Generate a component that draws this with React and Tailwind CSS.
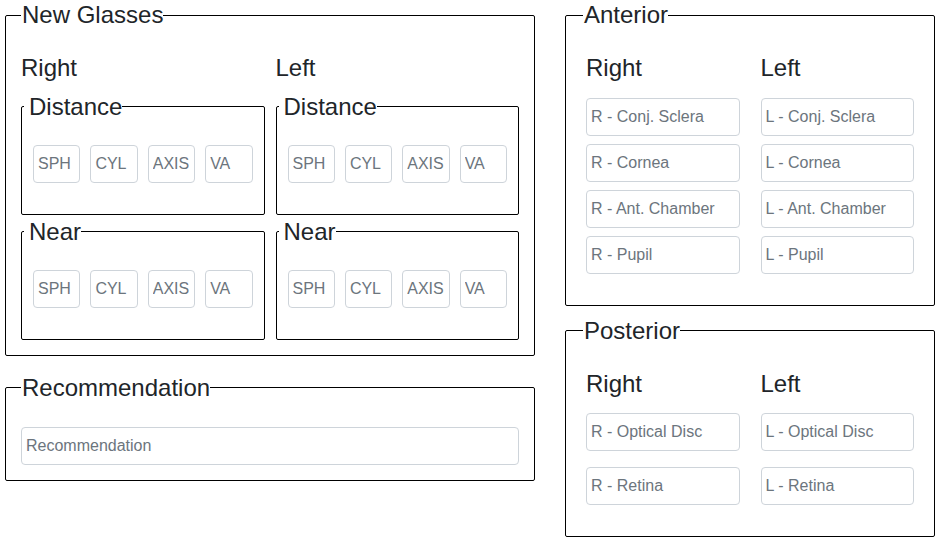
import { useState } from "react"

const font = "font-['Liberation_Sans',Arial,sans-serif]"

function Field({ placeholder }) {
  const [value, setValue] = useState("")
  return (
    <input
      type="text"
      value={value}
      onChange={(e) => setValue(e.target.value)}
      placeholder={placeholder}
      className="block h-[38px] w-full min-w-0 rounded-[4px] border border-[#ced4da] bg-white px-[4px] text-base text-[#495057] outline-none placeholder:text-[#6c757d]"
    />
  )
}

function Legend({ children, className = "" }) {
  return (
    <legend className={`text-2xl leading-[30px] text-[#212529] ${className}`}>
      {children}
    </legend>
  )
}

function Heading({ children, className = "" }) {
  return <h4 className={`text-2xl font-medium leading-[1.2] text-[#212529] ${className}`}>{children}</h4>
}

// one Distance / Near box with its four small inputs
function LensBox({ title, className = "" }) {
  return (
    <fieldset className={`rounded-[2px] border border-black px-[2px] pt-[23px] pb-[31px] ${className}`}>
      <Legend className="pl-[5px]">{title}</Legend>
      <div className="grid grid-cols-4 gap-[10px] px-[9px]">
        <Field placeholder="SPH" />
        <Field placeholder="CYL" />
        <Field placeholder="AXIS" />
        <Field placeholder="VA" />
      </div>
    </fieldset>
  )
}

function EyeColumn({ side }) {
  return (
    <div>
      <Heading className="mb-[9px]">{side}</Heading>
      <LensBox title="Distance" />
      <LensBox title="Near" className="mt-[2px]" />
    </div>
  )
}

function SideBySide({ title, rows, gapY, headingMb }) {
  return (
    <fieldset className="rounded-[2px] border border-black px-[17px] pt-[24px] pb-[31px]">
      <Legend className="pl-[1px]">{title}</Legend>
      <div className="px-[3px]">
        <div className="grid grid-cols-2 gap-x-[21px]">
          <Heading className={headingMb}>Right</Heading>
          <Heading className={headingMb}>Left</Heading>
        </div>
        <div className={`grid grid-cols-2 gap-x-[21px] ${gapY}`}>
          {rows.map((r) => [
            <Field key={"R" + r} placeholder={"R - " + r} />,
            <Field key={"L" + r} placeholder={"L - " + r} />,
          ])}
        </div>
      </div>
    </fieldset>
  )
}

export default function App() {
  return (
    <div className={`flex min-h-screen gap-[30px] bg-white px-[5px] ${font}`}>
      <div className="flex w-[530px] flex-col gap-[17px]">
        <fieldset className="rounded-[2px] border border-black px-[15px] pt-[24px] pb-[15px]">
          <Legend className="pl-[1px]">New Glasses</Legend>
          <div className="grid grid-cols-2 gap-[11px]">
            <EyeColumn side="Right" />
            <EyeColumn side="Left" />
          </div>
        </fieldset>

        <fieldset className="rounded-[2px] border border-black px-[15px] pt-[24px] pb-[15px]">
          <Legend className="pl-[1px]">Recommendation</Legend>
          <Field placeholder="Recommendation" />
        </fieldset>
      </div>

      <div className="flex w-[370px] flex-col gap-[10px]">
        <SideBySide
          title="Anterior"
          rows={["Conj. Sclera", "Cornea", "Ant. Chamber", "Pupil"]}
          gapY="gap-y-[8px]"
          headingMb="mb-[15px]"
        />
        <SideBySide
          title="Posterior"
          rows={["Optical Disc", "Retina"]}
          gapY="gap-y-[16px]"
          headingMb="mb-[14px]"
        />
      </div>
    </div>
  )
}
